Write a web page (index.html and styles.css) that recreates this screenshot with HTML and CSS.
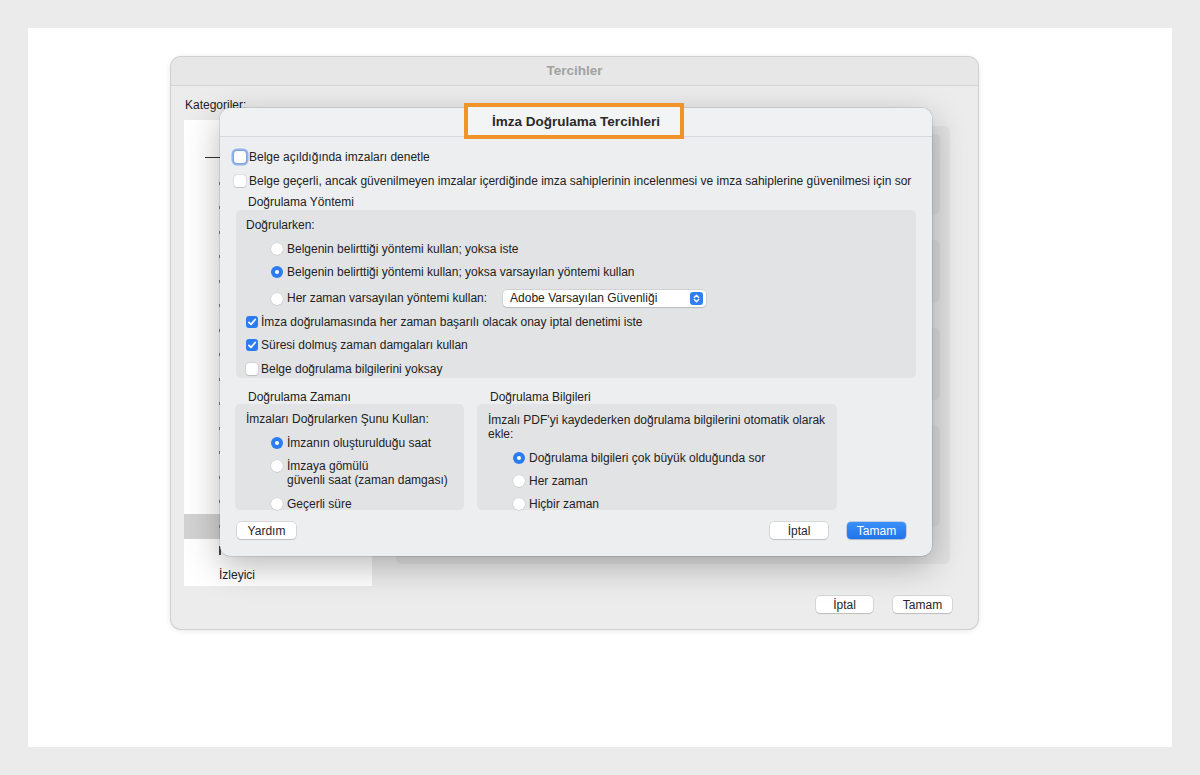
FILE: index.html
```html
<!DOCTYPE html>
<html lang="tr">
<head>
<meta charset="utf-8">
<title>Tercihler</title>
<link rel="stylesheet" href="styles.css">
</head>
<body>
<div class="frame">
  <div class="win">
    <div class="win-title">Tercihler</div>
    <div class="win-body">
      <div class="cat-col">
        <div class="cat-label">Kategoriler:</div>
        <div class="cat-list">
          <div class="cat-sep"></div>
          <div class="cat-item"><span class="mark"></span></div>
          <div class="cat-item"><span class="mark"></span></div>
          <div class="cat-item"><span class="mark"></span></div>
          <div class="cat-item"><span class="mark"></span></div>
          <div class="cat-item"><span class="mark"></span></div>
          <div class="cat-item"><span class="mark"></span></div>
          <div class="cat-item"><span class="mark"></span></div>
          <div class="cat-item"><span class="mark"></span></div>
          <div class="cat-item"><span class="mark"></span></div>
          <div class="cat-item"><span class="mark"></span></div>
          <div class="cat-item"><span class="mark"></span></div>
          <div class="cat-item"><span class="mark"></span></div>
          <div class="cat-item"><span class="mark"></span></div>
          <div class="cat-item"><span class="mark"></span></div>
          <div class="cat-item selected"><span class="mark"></span></div>
          <div class="cat-item"><span class="mark tall"></span></div>
          <div class="cat-item">İzleyici</div>
        </div>
      </div>
      <div class="panel-col">
        <div class="panel">
          <div class="panel-box h88"></div>
          <div class="panel-box h62"></div>
          <div class="panel-box h74"></div>
          <div class="panel-box h100"></div>
        </div>
      </div>
    </div>
    <div class="win-buttons">
      <div class="btn w57">İptal</div>
      <div class="btn w59">Tamam</div>
    </div>

    <div class="sheet">
      <div class="sheet-title">
        <div class="highlight"></div>
        <span class="sheet-title-text">İmza Doğrulama Tercihleri</span>
      </div>
      <div class="sheet-body">
        <div class="row">
          <span class="cb focus"></span><span>Belge açıldığında imzaları denetle</span>
        </div>
        <div class="row mt8">
          <span class="cb"></span><span>Belge geçerli, ancak güvenilmeyen imzalar içerdiğinde imza sahiplerinin incelenmesi ve imza sahiplerine güvenilmesi için sor</span>
        </div>
        <div class="sec-label mt5">Doğrulama Yöntemi</div>
        <div class="group g-method">
          <div class="row">Doğrularken:</div>
          <div class="row ind mt8"><span class="radio"></span><span>Belgenin belirttiği yöntemi kullan; yoksa iste</span></div>
          <div class="row ind mt7"><span class="radio on"></span><span>Belgenin belirttiği yöntemi kullan; yoksa varsayılan yöntemi kullan</span></div>
          <div class="row ind mt10 h17"><span class="radio"></span><span>Her zaman varsayılan yöntemi kullan:</span>
            <div class="popup"><span>Adobe Varsayılan Güvenliği</span>
              <svg class="stepper" width="13" height="13" viewBox="0 0 13 13"><rect width="13" height="13" rx="3" fill="#2f7ff3"/><path d="M4.3 5.4 L6.5 3.3 L8.7 5.4" fill="none" stroke="#fff" stroke-width="1.4" stroke-linecap="round" stroke-linejoin="round"/><path d="M4.3 7.6 L6.5 9.7 L8.7 7.6" fill="none" stroke="#fff" stroke-width="1.4" stroke-linecap="round" stroke-linejoin="round"/></svg>
            </div>
          </div>
          <div class="row mt7"><span class="cb on"><svg width="12" height="12" viewBox="0 0 12 12"><path d="M2.9 6.3 L5 8.4 L9.2 3.5" fill="none" stroke="#fff" stroke-width="1.7" stroke-linecap="round" stroke-linejoin="round"/></svg></span><span>İmza doğrulamasında her zaman başarılı olacak onay iptal denetimi iste</span></div>
          <div class="row mt7"><span class="cb on"><svg width="12" height="12" viewBox="0 0 12 12"><path d="M2.9 6.3 L5 8.4 L9.2 3.5" fill="none" stroke="#fff" stroke-width="1.7" stroke-linecap="round" stroke-linejoin="round"/></svg></span><span>Süresi dolmuş zaman damgaları kullan</span></div>
          <div class="row mt8"><span class="cb"></span><span>Belge doğrulama bilgilerini yoksay</span></div>
        </div>
        <div class="cols">
          <div class="col col-left">
            <div class="sec-label">Doğrulama Zamanı</div>
            <div class="group g-small">
              <div class="row">İmzaları Doğrularken Şunu Kullan:</div>
              <div class="row ind mt8"><span class="radio on"></span><span>İmzanın oluşturulduğu saat</span></div>
              <div class="row ind mt8 two"><span class="radio"></span><span>İmzaya gömülü<br>güvenli saat (zaman damgası)</span></div>
              <div class="row ind mt9"><span class="radio"></span><span>Geçerli süre</span></div>
            </div>
          </div>
          <div class="col col-right">
            <div class="sec-label">Doğrulama Bilgileri</div>
            <div class="group g-small">
              <div class="para">İmzalı PDF'yi kaydederken doğrulama bilgilerini otomatik olarak ekle:</div>
              <div class="row ind mt9"><span class="radio on"></span><span>Doğrulama bilgileri çok büyük olduğunda sor</span></div>
              <div class="row ind mt7"><span class="radio"></span><span>Her zaman</span></div>
              <div class="row ind mt7"><span class="radio"></span><span>Hiçbir zaman</span></div>
            </div>
          </div>
        </div>
        <div class="sheet-buttons">
          <div class="btn w59">Yardım</div>
          <div class="spacer"></div>
          <div class="btn w58">İptal</div>
          <div class="btn w59 primary">Tamam</div>
        </div>
      </div>
    </div>
  </div>
</div>
</body>
</html>
```

FILE: styles.css
```css
html, body {
  margin: 0;
  padding: 0;
}
body {
  background: #ebebeb;
  font-family: "Liberation Sans", Arial, sans-serif;
  color: #222222;
  padding: 28px;
}
.frame {
  width: 1144px;
  height: 719px;
  background: #ffffff;
  padding-top: 29px;
  box-sizing: border-box;
  overflow: hidden;
}
.win {
  position: relative;
  margin-left: 143px;
  width: 807px;
  height: 572px;
  border-radius: 10px;
  background: #ececec;
  box-shadow: 0 0 0 1px #d0d0d0, 0 1px 6px rgba(0, 0, 0, 0.12);
  overflow: hidden;
}
.win-title {
  height: 28px;
  border-bottom: 1px solid #d4d4d4;
  background: #e7e7e7;
  text-align: center;
  font-weight: bold;
  font-size: 13.5px;
  line-height: 27px;
  color: #a2a2a2;
}
.win-body {
  display: flex;
  padding: 11px 0 0 13px;
}
.cat-col {
  width: 188px;
}
.cat-label {
  height: 16px;
  line-height: 16px;
  font-size: 12px;
  margin-left: 1px;
  margin-bottom: 7px;
}
.cat-list {
  height: 466px;
  background: #ffffff;
  box-sizing: border-box;
  padding-top: 37px;
  overflow: hidden;
  font-size: 12px;
}
.cat-sep {
  height: 1px;
  margin-left: 21px;
  background: #333;
  margin-bottom: 13px;
}
.cat-item {
  height: 24.5px;
  line-height: 25px;
  padding-left: 35px;
  white-space: nowrap;
  display: flex;
  align-items: center;
}
.cat-item.selected {
  background: #d2d2d2;
}
.mark {
  display: block;
  width: 2px;
  height: 3px;
  background: #8a8a8a;
}
.mark.tall {
  height: 9px;
  background: #444;
}
.panel-col {
  margin-left: 24px;
  padding-top: 29px;
}
.panel {
  width: 554px;
  height: 438px;
  background: #e2e2e2;
  border-radius: 6px;
  box-sizing: border-box;
  padding: 8px 10px;
  display: flex;
  flex-direction: column;
  gap: 26px;
}
.panel-box {
  background: #dadada;
  border-radius: 5px;
}
.h88 { height: 80px; }
.h62 { height: 62px; }
.h74 { height: 72px; }
.h100 { height: 100px; }

.win-buttons {
  display: flex;
  justify-content: flex-end;
  gap: 20px;
  padding-right: 26px;
  margin-top: 10px;
}
.btn {
  height: 17px;
  line-height: 18px;
  background: #ffffff;
  border-radius: 4px;
  box-shadow: 0 0 0 0.5px rgba(0, 0, 0, 0.18), 0 1px 1px rgba(0, 0, 0, 0.12);
  font-size: 12px;
  text-align: center;
  color: #262626;
}
.w57 { width: 57px; }
.w58 { width: 58px; }
.w59 { width: 59px; }
.btn.primary {
  background: linear-gradient(#3b90f8, #1f74ea);
  color: #ffffff;
  box-shadow: 0 0 0 0.5px rgba(0, 60, 160, 0.35), 0 1px 1px rgba(0, 0, 0, 0.12);
}

.sheet {
  position: absolute;
  left: 49px;
  top: 51px;
  width: 712px;
  height: 448px;
  border-radius: 10px;
  background: #eceef0;
  box-shadow: 0 0 0 0.5px rgba(0, 0, 0, 0.18), 0 10px 34px rgba(0, 0, 0, 0.28);
}
.sheet-title {
  position: relative;
  height: 28px;
  border-bottom: 1px solid #d8d9dc;
  background: #f0f1f3;
  border-radius: 10px 10px 0 0;
  text-align: center;
  font-weight: bold;
  font-size: 13.5px;
  line-height: 28px;
  color: #2a2a2a;
}
.sheet-title-text {
  position: relative;
}
.highlight {
  position: absolute;
  left: 244px;
  top: -5px;
  width: 220px;
  height: 36px;
  box-sizing: border-box;
  border: 4px solid #f0932b;
  background: #f3f4f6;
}
.sheet-body {
  padding: 12px 26px 0 14px;
  font-size: 12px;
}
.row {
  display: flex;
  align-items: center;
  height: 16px;
  line-height: 17px;
  white-space: nowrap;
}
.row.h17 { height: 17px; }
.row.two {
  height: 28px;
  align-items: flex-start;
  line-height: 14px;
}
.row.two .radio { margin-top: 1px; }
.ind { padding-left: 25px; }
.mt5 { margin-top: 5px; }
.mt7 { margin-top: 7px; }
.mt8 { margin-top: 8px; }
.mt9 { margin-top: 9px; }
.mt10 { margin-top: 10px; }

.cb {
  flex: none;
  width: 12px;
  height: 12px;
  border-radius: 3px;
  background: #ffffff;
  box-shadow: 0 0 0 0.5px rgba(0, 0, 0, 0.12), 0 0.5px 1px rgba(0, 0, 0, 0.12);
  margin-right: 3px;
  display: flex;
}
.cb.focus {
  box-shadow: 0 0 0 0.5px rgba(0, 0, 0, 0.2), 0 0 0 2.5px rgba(70, 135, 235, 0.55);
}
.cb.on {
  background: #2b7cf0;
  box-shadow: none;
}
.radio {
  flex: none;
  position: relative;
  width: 12px;
  height: 12px;
  border-radius: 50%;
  background: #ffffff;
  box-shadow: 0 0 0 0.5px rgba(0, 0, 0, 0.08), 0 0.5px 1px rgba(0, 0, 0, 0.12);
  margin-right: 4px;
}
.radio.on {
  background: #2b7cf0;
  box-shadow: none;
}
.radio.on::after {
  content: "";
  position: absolute;
  left: 4px;
  top: 4px;
  width: 4px;
  height: 4px;
  border-radius: 50%;
  background: #ffffff;
}
.popup {
  margin-left: 16px;
  width: 203px;
  height: 17px;
  box-sizing: border-box;
  padding: 0 3px 0 7px;
  background: #ffffff;
  border-radius: 4px;
  box-shadow: 0 0 0 0.5px rgba(0, 0, 0, 0.16), 0 1px 1px rgba(0, 0, 0, 0.1);
  display: flex;
  align-items: center;
  justify-content: space-between;
}
.stepper {
  display: block;
}
.sec-label {
  height: 16px;
  line-height: 17px;
  padding-left: 14px;
}
.group {
  background: #e2e3e5;
  border-radius: 5px;
  box-sizing: border-box;
}
.g-method {
  margin-left: 2px;
  width: 680px;
  height: 168px;
  padding: 7px 0 0 10px;
}
.cols {
  display: flex;
  margin-top: 11px;
}
.col .sec-label {
  height: 15px;
  line-height: 16px;
  padding-left: 13px;
}
.col-left {
  margin-left: 1px;
  width: 229px;
}
.col-right {
  margin-left: 13px;
  width: 360px;
}
.g-small {
  height: 106px;
  padding: 7px 0 0 11px;
}
.para {
  margin-top: 2px;
  line-height: 14px;
  padding-right: 8px;
}
.sheet-buttons {
  display: flex;
  margin-top: 12px;
  margin-left: 3px;
  gap: 19px;
}
.spacer {
  flex: 1;
}
```
